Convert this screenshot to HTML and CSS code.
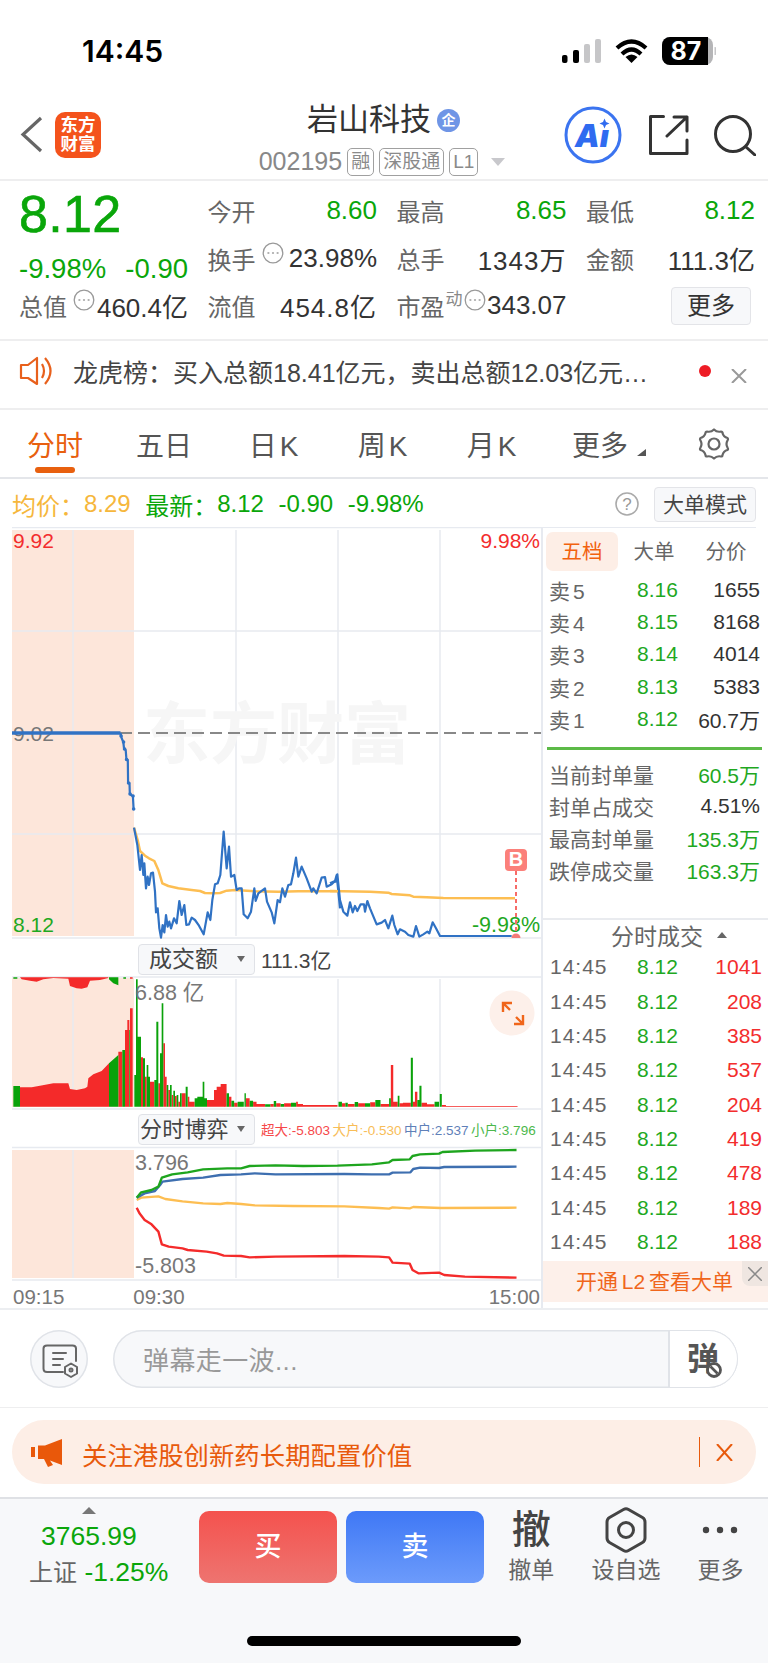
FILE: index.html
```html
<!DOCTYPE html>
<html lang="zh-CN">
<head>
<meta charset="utf-8">
<title>岩山科技</title>
<link rel="stylesheet" href="styles.css">
</head>
<body>
<div class="page">

<div class="status">
  <span class="clock">14:45</span>
  <svg class="status-icons" viewBox="562 31 154 40" width="154" height="40">
    <rect x="562" y="55" width="5.5" height="8" rx="2"/>
    <rect x="573" y="50" width="6" height="13" rx="2"/>
    <rect class="dim" x="584" y="44" width="6" height="19" rx="2"/>
    <rect class="dim" x="595" y="39" width="6" height="24" rx="2"/>
    <path class="wifi" d="M617 48Q631.500 35 646 48"/>
    <path class="wifi" d="M622 54Q631.500 45 641 54"/>
    <path d="M631.500 63L625.500 57Q631.500 52 637.500 57Z"/>
    <rect class="batt-back" x="662" y="37" width="51" height="28" rx="8"/>
    <path d="M670 37H708V65H670A8 8 0 0 1 662 57V45A8 8 0 0 1 670 37Z"/>
    <path class="dim" d="M714.500 47A4 4 0 0 1 714.500 55Z"/>
    <text class="batt-text" x="686" y="60">87</text>
  </svg>
</div>

<header class="top">
  <div class="top-left">
    <svg class="back" viewBox="20 118 23 37" width="23" height="37"><path d="M41 120L23 136.500L41 153"/></svg>
    <div class="logo"><span>东方</span><span>财富</span></div>
  </div>
  <div class="top-mid">
    <div class="name">岩山科技<span class="ent">企</span></div>
    <div class="sub">
      <span class="code">002195</span>
      <span class="tag">融</span>
      <span class="tag">深股通</span>
      <span class="tag">L1</span>
      <i class="tri-down"></i>
    </div>
  </div>
  <div class="top-right">
    <svg class="ic-ai" viewBox="564 106 58 58" width="58" height="58">
      <circle cx="593" cy="135" r="27"/>
      <text x="575" y="147">Aı</text>
      <path d="M604.500 118.500L606 122L609.500 123.500L606 125L604.500 128.500L603 125L599.500 123.500L603 122Z"/>
    </svg>
    <svg class="ic-line" viewBox="647 116 41 40" width="41" height="40"><path d="M662.500 117.500H649.500V154.500H686V141M666 137L686 118M673 118H686V132"/></svg>
    <svg class="ic-line" viewBox="714 114 42 42" width="42" height="42"><circle cx="733" cy="134" r="17.500"/><path d="M746 147L755 155"/></svg>
  </div>
</header>

<section class="quote">
  <div class="big">8.12</div>
  <div class="cell"><span class="lb">今开</span><span class="val green">8.60</span></div>
  <div class="cell"><span class="lb">最高</span><span class="val green">8.65</span></div>
  <div class="cell"><span class="lb">最低</span><span class="val green">8.12</span></div>

  <div class="cell chg"><span class="val green">-9.98%</span><span class="val green">-0.90</span></div>
  <div class="cell"><span class="lb">换手</span><svg class="dots" viewBox="0 0 22 22" width="22" height="22"><circle cx="11" cy="11" r="9.800"/><path d="M6 11h.8M10.600 11h.8M15.200 11h.8"/></svg><span class="val">23.98%</span></div>
  <div class="cell"><span class="lb">总手</span><span class="val wide">1343万</span></div>
  <div class="cell"><span class="lb">金额</span><span class="val">111.3亿</span></div>

  <div class="cell"><span class="lb">总值</span><svg class="dots" viewBox="0 0 22 22" width="22" height="22"><circle cx="11" cy="11" r="9.800"/><path d="M6 11h.8M10.600 11h.8M15.200 11h.8"/></svg><span class="val">460.4亿</span></div>
  <div class="cell"><span class="lb">流值</span><span class="val wide">454.8亿</span></div>
  <div class="cell"><span class="lb">市盈</span><sup class="sup">动</sup><svg class="dots" viewBox="0 0 22 22" width="22" height="22"><circle cx="11" cy="11" r="9.800"/><path d="M6 11h.8M10.600 11h.8M15.200 11h.8"/></svg><span class="val">343.07</span></div>
  <div class="cell cell-end"><span class="more-btn">更多</span></div>
</section>

<section class="notice">
  <svg class="speaker" viewBox="19 353 34 30" width="34" height="30">
    <path d="M21 362H28L37 355V381L28 375H21Z"/><path d="M42 361Q46 368 42 375"/><path d="M45 355Q56 368 45 381"/>
  </svg>
  <span class="notice-text">龙虎榜&#xFF1A;买入总额18.41亿元&#xFF0C;卖出总额12.03亿元…</span>
  <i class="red-dot"></i>
  <svg class="notice-x" viewBox="0 0 16 14" width="16" height="14"><path d="M1 0L15 14M15 0L1 14"/></svg>
</section>

<nav class="tabs">
  <span class="tab on">分时</span>
  <span class="tab">五日</span>
  <span class="tab tab-k">日K</span>
  <span class="tab tab-k">周K</span>
  <span class="tab tab-k">月K</span>
  <span class="tab">更多<svg class="corner" viewBox="0 0 9 7" width="9" height="7"><path d="M0 7L9 0V7Z"/></svg></span>
  <svg class="gear" viewBox="-17 -16 34 32" width="34" height="32">
    <path d="M0 -14.500Q3 -11.500 7 -12.500Q8.500 -12.500 8.500 -11Q9.500 -7 13.500 -6Q14.500 -5 13.500 -3.500Q11.500 0 13.500 3.500Q14.500 5 13.500 6Q9.500 7 8.500 11Q8.500 12.500 7 12.500Q3 11.500 0 14.500Q-3 11.500 -7 12.500Q-8.500 12.500 -8.500 11Q-9.500 7 -13.500 6Q-14.500 5 -13.500 3.500Q-11.500 0 -13.500 -3.500Q-14.500 -5 -13.500 -6Q-9.500 -7 -8.500 -11Q-8.500 -12.500 -7 -12.500Q-3 -11.500 0 -14.500Z"/>
    <circle r="5.500"/>
  </svg>
</nav>

<section class="info">
  <span class="orange">均价&#xFF1A;</span><span class="orange">8.29</span>
  <span class="green ml">最新&#xFF1A;</span><span class="green">8.12</span>
  <span class="green ml">-0.90</span>
  <span class="green ml">-9.98%</span>
  <svg class="help" viewBox="0 0 24 24" width="24" height="24"><circle cx="12" cy="12" r="11"/><text x="12" y="17.500">?</text></svg>
  <span class="mode">大单模式</span>
</section>

<main class="main">
  <div class="charts">
    <svg class="chart" viewBox="0 527 541 413" width="541" height="413">
      <rect class="pink" x="12" y="530" width="122" height="406"/>
      <path class="grid" d="M12 527.500H541M12 631H541M12 834H541M12 938H541M73 530V936M236 530V936M338 530V936M440 530V936"/>
      <text class="wm" x="143" y="758">东方财富</text>
      <path class="dash" d="M120 733H541"/>
      <text class="t20 red" x="13" y="547.500">9.92</text>
      <text class="t20 red end" x="540" y="547.500">9.98%</text>
      <text class="t20 gray" x="13" y="740.500">9.02</text>
      <text class="t20 green-t" x="13" y="931.500">8.12</text>
      <path class="price thick" d="M12 733H120.500"/>
      <path class="price thin" d="M120.500 733L121.600 738 123.300 742 124 748 125.700 750 126.400 759 127.800 760 128.100 783 129.500 783 129.800 793 130.900 795 132.900 796 133.600 809"/>
      <path class="price-dots" d="M121 736h.1M123.500 742h.1M124.500 749h.1M126.500 759.500h.1M128.500 783h.1M130 794h.1M133 796h.1M133.600 809h.1"/>
      <g transform="translate(125 825) scale(.33333)">
        <polyline class="avg" points="27,8 38,45 45,78 60,92 72,100 88,108 100,135 112,175 130,183 160,190 200,195 225,198 240,204 265,205 285,204 305,197 330,195 390,199 460,200 520,199 645,199"/>
        <polyline class="price" points="27,8 37,60 45,135 50,90 55,150 58,115 63,190 68,155 72,180 78,145 84,143 90,200 93,262 98,250 103,310 108,338 113,300 118,322 123,270 128,305 133,290 138,310 147,280 155,295 163,228 170,270 178,240 184,300 192,298 200,278 210,285 222,302 236,328 248,262 256,285 262,225 270,178 278,175 286,150 296,20 305,130 312,65 318,155 328,150 335,195 342,190 350,190 356,268 368,280 378,260 388,190 392,228 400,205 420,190 426,230 440,262 448,295 458,225 465,232 472,190 480,215 490,180 498,178 505,145 513,98 520,155 530,125 545,160 560,200 565,190 575,205 590,158 600,156 605,185 620,178 630,168 635,150 645,250"/>
      </g>
      <g transform="translate(330 825) scale(.33333)">
        <polyline class="avg" points="0,198 120,200 175,203 185,207 240,211 250,215 290,217 340,219 555,220"/>
        <polyline class="price" points="0,175 10,170 18,170 22,148 30,225 40,260 52,272 60,232 68,262 75,243 82,258 92,238 102,238 105,260 112,228 120,250 140,298 155,293 165,285 175,310 187,272 193,300 203,328 210,313 225,320 235,330 250,335 258,303 268,335 280,328 292,320 298,325 308,292 318,310 330,333 545,333"/>
      </g>
      <text class="t21 green-t end" x="540" y="932">-9.98%</text>
      <path class="b-line" d="M516 871V934"/>
      <path class="b-dot" d="M511.500 938A4.500 4.500 0 0 1 520.500 938Z"/>
      <rect class="b-box" x="505" y="849" width="22" height="22" rx="4"/>
      <text class="b-text" x="516" y="866">B</text>
    </svg>

    <div class="bar">
      <span class="sel">成交额<i class="tri-sel"></i></span>
      <span class="amount">111.3亿</span>
    </div>

    <svg class="chart" viewBox="0 976 541 134" width="541" height="134">
      <rect class="pink" x="12" y="978" width="122" height="129"/>
      <path class="grid" d="M12 977H541M12 1109H541M73 979V1107M236 979V1107M338 979V1107M440 979V1107"/>
      <g transform="translate(10 970) scale(.33333)">
        <path class="fill-red" d="M30 22L35 28 60 32 80 35 100 28 130 24 175 26 180 48 200 55 215 56 232 52 240 32 270 30 295 24V22ZM360 22H368V26H360Z"/>
        <path class="fill-green" d="M297 22H325V46L310 40 297 28ZM340 22H348V26H340ZM10 22H22V26H10Z"/>
        <path class="fill-red" d="M30 410V352L65 352 90 347 130 340 175 340 180 357 200 360 225 355 232 350 235 325 250 313 275 303 297 280V410ZM325 410V245H337V410ZM345 410V180H352V410ZM352 410V150H358V410ZM360 410V115H368V410ZM393 410V262H399V410ZM405 410V320H410V410ZM420 410V335H433V410ZM445 410V340H450V410ZM460 410V220H465V410ZM465 410V320H470V410ZM475 410V360H480V410ZM485 410V375H490V410ZM495 410V378H500V410ZM505 410V395H510V410ZM515 410V370H527V410ZM533 410V380H538V410ZM538 410V395H554V410ZM591 410V390H612V410ZM612 410V360H620V410ZM620 410V350H632V410ZM632 410V342H645V410Z"/>
        <path class="fill-green" d="M10 410V348H30V410ZM297 410V280L325 255V410ZM337 410V240H345V410ZM358 410V180H360V410ZM373 410V315H378V410ZM378 410V28H383V410ZM383 410V200H393V410ZM399 410V265H405V410ZM410 410V285H415V410ZM415 410V320H420V410ZM433 410V330H439V410ZM439 410V155H445V410ZM450 410V250H455V410ZM455 410V100H460V410ZM470 410V345H475V410ZM480 410V345H485V410ZM490 410V362H495V410ZM500 410V375H505V410ZM510 410V370H515V410ZM527 410V350H533V410ZM554 410V385H562V410ZM562 410V380H578V410ZM578 410V335H583V410ZM583 410V385H591V410Z"/>
      </g>
      <g transform="translate(0 930) scale(.34435 .33333)">
        <path class="fill-red" d="M652 530V462H658V530ZM665 530V500H672V530ZM680 530V518H690V530ZM714 530V505H725V530ZM735 530V515H745V530ZM745 530V522H770V530ZM785 530V522H795V530ZM802 530V520H815V530ZM825 530V520H845V530ZM860 530V515H865V530ZM865 530V522H880V530ZM880 530V525H980V530ZM993 530V520H1003V530ZM1010 530V522H1030V530ZM1040 530V520H1060V530ZM1075 530V517H1090V530ZM1105 530V522H1130V530ZM1135 530V405H1142V530ZM1142 530V515H1155V530ZM1160 530V520H1170V530ZM1170 530V518H1193V530ZM1199 530V515H1205V530ZM1205 530V485H1212V530ZM1224 530V518H1240V530ZM1240 530V523H1262V530ZM1283 530V525H1295V530ZM1295 530V528H1503V530Z"/>
        <path class="fill-green" d="M658 530V490H665V530ZM672 530V512H680V530ZM690 530V515H708V530ZM710 530V490H714V530ZM725 530V512H735V530ZM770 530V523H785V530ZM795 530V513H802V530ZM815 530V522H825V530ZM845 530V518H860V530ZM983 530V515H993V530ZM1003 530V518H1010V530ZM1030 530V516H1040V530ZM1060 530V520H1075V530ZM1090 530V510H1105V530ZM1130 530V505H1135V530ZM1155 530V497H1160V530ZM1193 530V383H1199V530ZM1212 530V510H1218V530ZM1218 530V467H1224V530ZM1262 530V515H1275V530ZM1277 530V492H1283V530Z"/>
      </g>
      <text class="t21 gray" x="135" y="999.500">6.88 亿</text>
      <circle class="expand-bg" cx="512" cy="1013" r="22.500"/>
      <path class="expand" d="M503 1012V1003H512M503 1003L510 1010M523 1015V1024H514M523 1024L516 1017"/>
    </svg>

    <div class="bar">
      <span class="sel sel-tight">分时博弈<i class="tri-sel"></i></span>
      <span class="legend lg-red">超大:-5.803</span>
      <span class="legend lg-yel">大户:-0.530</span>
      <span class="legend lg-blue">中户:2.537</span>
      <span class="legend lg-green">小户:3.796</span>
    </div>

    <svg class="chart" viewBox="0 1146 541 136" width="541" height="136">
      <rect class="pink" x="12" y="1150" width="122" height="128"/>
      <path class="grid" d="M12 1147.500H541M12 1280H541M73 1150V1278M236 1150V1278M338 1150V1278M440 1150V1278"/>
      <g transform="translate(0 1105) scale(.34435 .33333)">
        <polyline class="ln ln-yel" points="397,285 410,278 460,274 480,282 530,289 590,295 640,297 660,294 700,297 740,301 850,303 1000,304 1100,309 1130,311 1140,307 1190,310 1200,306 1280,309 1500,308"/>
        <polyline class="ln ln-blue" points="397,278 420,265 450,258 465,240 472,230 530,222 590,218 640,210 700,208 740,205 800,208 1000,207 1080,208 1130,208 1140,203 1192,202 1200,192 1220,188 1275,189 1290,186 1500,185"/>
        <polyline class="ln ln-green" points="397,278 410,262 440,255 460,245 470,218 500,208 545,202 590,193 660,190 700,190 725,183 800,181 880,183 980,182 1080,178 1130,172 1140,165 1190,163 1198,153 1220,148 1275,146 1285,141 1380,137 1500,135"/>
        <polyline class="ln ln-red" points="397,308 405,325 420,345 440,358 460,380 470,418 490,425 530,430 545,435 600,440 630,445 650,452 700,453 725,457 800,455 1000,453 1100,455 1130,457 1140,473 1190,476 1198,495 1215,505 1275,503 1290,510 1350,515 1500,518"/>
      </g>
      <text class="t21 gray" x="135" y="1169.500">3.796</text>
      <text class="t21 gray" x="135" y="1272.500">-5.803</text>
    </svg>

    <div class="axis"><span>09:15</span><span>09:30</span><span class="axis-end">15:00</span></div>
  </div>

  <aside class="side">
    <div class="side-tabs"><span class="st on">五档</span><span class="st">大单</span><span class="st">分价</span></div>
    <div class="row"><span class="r-lb sell">卖5</span><span class="green2">8.16</span><span class="r-val">1655</span></div>
    <div class="row"><span class="r-lb sell">卖4</span><span class="green2">8.15</span><span class="r-val">8168</span></div>
    <div class="row"><span class="r-lb sell">卖3</span><span class="green2">8.14</span><span class="r-val">4014</span></div>
    <div class="row"><span class="r-lb sell">卖2</span><span class="green2">8.13</span><span class="r-val">5383</span></div>
    <div class="row"><span class="r-lb sell">卖1</span><span class="green2">8.12</span><span class="r-val">60.7万</span></div>
    <div class="green-rule"></div>
    <div class="row2"><span class="r-lb">当前封单量</span><span class="r-val up">60.5万</span></div>
    <div class="row2"><span class="r-lb">封单占成交</span><span class="r-val">4.51%</span></div>
    <div class="row2"><span class="r-lb">最高封单量</span><span class="r-val up">135.3万</span></div>
    <div class="row2"><span class="r-lb">跌停成交量</span><span class="r-val up">163.3万</span></div>
    <div class="ticks-title"><span>分时成交</span><i class="tri-up"></i></div>
    <div class="tick"><span class="t-time">14:45</span><span class="green2">8.12</span><span class="t-vol">1041</span></div>
    <div class="tick"><span class="t-time">14:45</span><span class="green2">8.12</span><span class="t-vol">208</span></div>
    <div class="tick"><span class="t-time">14:45</span><span class="green2">8.12</span><span class="t-vol">385</span></div>
    <div class="tick"><span class="t-time">14:45</span><span class="green2">8.12</span><span class="t-vol">537</span></div>
    <div class="tick"><span class="t-time">14:45</span><span class="green2">8.12</span><span class="t-vol">204</span></div>
    <div class="tick"><span class="t-time">14:45</span><span class="green2">8.12</span><span class="t-vol">419</span></div>
    <div class="tick"><span class="t-time">14:45</span><span class="green2">8.12</span><span class="t-vol">478</span></div>
    <div class="tick"><span class="t-time">14:45</span><span class="green2">8.12</span><span class="t-vol">189</span></div>
    <div class="tick"><span class="t-time">14:45</span><span class="green2">8.12</span><span class="t-vol">188</span></div>
    <div class="l2">开通 L2 查看大单
      <span class="l2-close"><svg viewBox="0 0 14 14" width="14" height="14"><path d="M0 0L14 14M14 0L0 14"/></svg></span>
    </div>
  </aside>
</main>

<section class="comment">
  <span class="round">
    <svg viewBox="30 1329 58 58" width="58" height="58">
      <path class="doc" d="M63 1371H47Q43.500 1371 43.500 1367.500V1347.500Q43.500 1344.500 47 1344.500H72.500Q76 1344.500 76 1347.500V1360"/>
      <path class="doc" d="M53 1352H66M53 1358H63M53 1364H60"/>
      <path class="doc" d="M71 1362.500L77 1366V1372.500L71 1376L65 1372.500V1366Z"/>
      <circle class="doc" cx="71" cy="1369" r="1.500"/>
    </svg>
  </span>
  <div class="input">
    <span class="ph">弹幕走一波...</span>
    <span class="dm">
      <svg viewBox="668 1329 70 58" width="70" height="58">
        <text class="dm-text" x="687" y="1370">弹</text>
        <circle class="dm-bg" cx="714" cy="1370" r="6.500"/>
        <path class="dm-slash" d="M710.500 1366.500L717.500 1373.500"/>
      </svg>
    </span>
  </div>
</section>

<section class="promo-wrap">
  <div class="promo">
    <svg class="horn" viewBox="30 1438 33 29" width="33" height="29">
      <path d="M31 1447H35V1457H31ZM38 1445.500H45L62 1439V1465L50 1460.500L53 1465L48 1467L44 1459H38Z"/>
    </svg>
    <span class="promo-text">关注港股创新药长期配置价值</span>
    <i class="promo-sep"></i>
    <svg class="promo-x" viewBox="0 0 17 17" width="17" height="17"><path d="M1 0L16 17M16 0L1 17"/></svg>
  </div>
</section>

<footer class="foot">
  <div class="foot-row">
    <div class="index">
      <i class="tri-index"></i>
      <span class="idx-val">3765.99</span>
      <span class="idx-row"><span class="idx-name">上证</span> <span class="green">-1.25%</span></span>
    </div>
    <span class="trade buy">买</span>
    <span class="trade sell-btn">卖</span>
    <div class="act"><span class="act-ic act-glyph">撤</span><span class="act-lb">撤单</span></div>
    <div class="act">
      <svg class="act-ic hex" viewBox="0 0 42 46" width="42" height="46"><path d="M18.500 2.500Q21 1 23.500 2.500L37.500 10.500Q40 12 40 15V31Q40 34 37.500 35.500L23.500 43.500Q21 45 18.500 43.500L4.500 35.500Q2 34 2 31V15Q2 12 4.500 10.500Z"/><circle cx="21" cy="23" r="7.500"/></svg>
      <span class="act-lb">设自选</span>
    </div>
    <div class="act">
      <svg class="act-ic threedots" viewBox="0 0 42 46" width="42" height="46"><circle cx="7" cy="23" r="3.200"/><circle cx="21" cy="23" r="3.200"/><circle cx="35" cy="23" r="3.200"/></svg>
      <span class="act-lb">更多</span>
    </div>
  </div>
  <div class="home"></div>
</footer>

</div>
</body>
</html>
```

FILE: styles.css
```css
* { box-sizing: border-box; }
html, body { margin: 0; padding: 0; }
body {
  width: 768px;
  height: 1663px;
  overflow: hidden;
  background: #fff;
  font-family: "Liberation Sans", "Noto Sans CJK SC", sans-serif;
  color: #333;
}
i { display: block; font-style: normal; }
.page { width: 768px; height: 1663px; display: flex; flex-direction: column; }
.green { color: #0aa60a; }
.orange { color: #f6b73c; }
.green2 { color: #1fa81f; }

/* status bar */
.status { height: 90px; padding: 12px 52px 0 82px; display: flex; align-items: center; justify-content: space-between; flex: none; }
.clock { font: 600 30px/1 Inter, sans-serif; color: #000; }
.status-icons { display: block; fill: #000; }
.status-icons .dim { fill: #c6c6c8; }
.wifi { fill: none; stroke: #000; stroke-width: 4.200; }
.batt-back { fill: #b5b5b7; }
.batt-text { font: 700 25px Inter, sans-serif; fill: #fff; text-anchor: middle; }

/* header */
.top { height: 91px; flex: none; display: grid; grid-template-columns: 1fr auto 1fr; border-bottom: 2px solid #eeeeef; }
.top-left { display: flex; align-items: center; padding-left: 20px; gap: 12px; }
.back { fill: none; stroke: #666; stroke-width: 3.200; }
.logo { width: 46px; height: 46px; border-radius: 10px; background: #f4531c; color: #fff; font-size: 17.500px; line-height: 19px; font-weight: 700; display: flex; flex-direction: column; align-items: center; justify-content: center; }
.logo span { display: block; }
.top-mid { padding: 14px 4px 0 0; display: flex; flex-direction: column; align-items: center; }
.name { font-size: 31px; line-height: 32px; color: #333; display: flex; align-items: center; gap: 6px; padding-left: 3px; }
.ent { width: 23px; height: 23px; border-radius: 50%; background: #6f95e6; color: #fff; font-size: 14px; line-height: 23px; text-align: center; font-weight: 700; }
.sub { margin-top: 11px; display: flex; align-items: center; gap: 5px; color: #888; }
.code { font-size: 25px; }
.tag { height: 28px; border: 1px solid #a0a0a0; border-radius: 5px; font-size: 19px; line-height: 26px; padding: 0 3px; color: #8a8a8a; }
.tri-down { width: 0; height: 0; margin-left: 8px; border-left: 7px solid transparent; border-right: 7px solid transparent; border-top: 8px solid #c8c8cc; }
.top-right { display: flex; align-items: center; justify-content: flex-end; padding-right: 12px; gap: 25.500px; }
.ic-ai circle { fill: none; stroke: #3b74f0; stroke-width: 3; }
.ic-ai text { font: italic 900 31px Inter, sans-serif; fill: #2f6bf0; }
.ic-ai path { fill: #2f6bf0; }
.ic-line { fill: none; stroke: #333; stroke-width: 3; stroke-linecap: round; stroke-linejoin: round; }

/* quote */
.quote { height: 160px; flex: none; padding: 6px 13px 0 19px; display: grid; grid-template-columns: 169px 169.500px 170px 169px; grid-auto-rows: 47.500px; column-gap: 19.500px; border-bottom: 2px solid #eeeeef; }
.big { font-size: 52px; line-height: 52px; font-weight: 400; color: #0aa60a; margin-top: 1px; letter-spacing: .3px; -webkit-text-stroke: .6px #0aa60a; }
.cell { display: flex; align-items: center; }
.cell.chg { justify-content: space-between; margin-top: 14px; height: 40px; }
.cell-end { justify-content: flex-end; padding-right: 4px; }
.lb { font-size: 24px; color: #666; white-space: nowrap; }
.val { font-size: 26px; margin-left: auto; white-space: nowrap; }
.val.wide { letter-spacing: 1px; }
.chg .val { margin-left: 0; font-size: 27.500px; }
.dots { fill: none; stroke: #999; stroke-width: 1.300; margin: 0 0 11px 6px; flex: none; }
.dots path { stroke-width: 1.500; stroke-linecap: round; }
.sup { font-size: 17px; line-height: 17px; color: #888; margin: 0 0 12px 1px; align-self: center; }
.sup + .dots { margin-left: 1px; }
.more-btn { width: 80px; height: 38px; border: 1px solid #e3e4e8; border-radius: 4px; background: #f7f8fa; font-size: 24px; line-height: 36px; text-align: center; }

/* notice */
.notice { height: 69px; flex: none; display: flex; align-items: center; padding: 0 21px 8px 19px; border-bottom: 2px solid #eeeeef; }
.speaker { fill: none; stroke: #e8601c; stroke-width: 2.200; stroke-linejoin: round; }
.notice-text { font-size: 25px; color: #444; margin-left: 20px; white-space: nowrap; }
.red-dot { width: 12px; height: 12px; border-radius: 50%; background: #ee1c25; margin: 0 0 0 auto; }
.notice-x { fill: none; stroke: #999; stroke-width: 2; margin: 10px 0 0 20px; }

/* tabs */
.tabs { height: 69px; flex: none; display: flex; align-items: center; border-bottom: 2px solid #e4e6ea; }
.tab { width: 109px; text-align: center; font-size: 28px; color: #555; position: relative; }
.tab:first-child { margin-left: .5px; }
.tab.on { color: #e8600f; }
.tab.on::after { content: ""; position: absolute; left: 34.500px; top: 43px; width: 40px; height: 6px; border-radius: 3px; background: #e8600f; }
.tab-k { letter-spacing: 3px; padding-left: 4px; }
.corner { position: absolute; left: 91px; top: 25px; fill: #555; }
.gear { margin-left: 42px; fill: none; stroke: #666; stroke-width: 2.200; stroke-linejoin: round; }

/* info line */
.info { height: 48px; flex: none; display: flex; align-items: center; padding: 2px 12px 0; font-size: 24px; }
.ml { margin-left: 14.500px; }
.help { margin-left: auto; fill: none; stroke: #aaa; stroke-width: 1.600; }
.help text { font: 17px "Liberation Sans", sans-serif; fill: #999; stroke: none; text-anchor: middle; }
.mode { margin-left: 15px; width: 102px; height: 35px; border: 1px solid #e3e4e8; border-radius: 4px; background: #f7f8fa; font-size: 21px; line-height: 33px; text-align: center; color: #444; }

/* main */
.main { height: 783px; flex: none; display: flex; border-bottom: 2px solid #eceef1; }
.charts { width: 541px; flex: none; display: flex; flex-direction: column; }
.chart { display: block; flex: none; }
.pink { fill: #fde6da; }
.grid { fill: none; stroke: #e7eaf0; stroke-width: 1.500; }
.wm { font-size: 67px; font-weight: 700; fill: #f6f6f6; }
.dash { fill: none; stroke: #888; stroke-width: 2; stroke-dasharray: 12 6; }
.t20 { font-size: 21px; }
.t21 { font-size: 21.500px; }
.red { fill: #f32d2d; }
.gray { fill: #777; }
.green-t { fill: #1fa81f; }
.end { text-anchor: end; }
.price, .avg, .ln { fill: none; vector-effect: non-scaling-stroke; stroke-linejoin: round; }
.price { stroke: #3072c4; stroke-width: 2.200; }
.price.thick { stroke-width: 3.500; }
.price-dots { fill: none; stroke: #3072c4; stroke-width: 3.500; stroke-linecap: round; }
.avg { stroke: #fdbe52; stroke-width: 2.500; }
.b-line { fill: none; stroke: #f76b68; stroke-width: 2; stroke-dasharray: 4 3; }
.b-dot { fill: #f47a78; }
.b-box { fill: #fb807a; }
.b-text { font-size: 20px; font-weight: 700; fill: #fff; text-anchor: middle; }
.fill-red { fill: #f42a2a; }
.fill-green { fill: #0aa20a; }
.expand-bg { fill: #fdf0ea; }
.expand { fill: none; stroke: #f0661b; stroke-width: 2.400; }
.bar { height: 36px; flex: none; display: flex; align-items: center; padding: 2px 0 0 138px; }
.sel { width: 117px; height: 31px; border: 1px solid #e0e2e7; border-radius: 4px; background: #f7f8fa; font-size: 23px; line-height: 29px; padding-left: 10px; display: flex; align-items: center; color: #444; white-space: nowrap; }
.sel-tight { padding-left: 1px; font-size: 22px; letter-spacing: .2px; }
.tri-sel { width: 0; height: 0; margin-left: auto; margin-right: 9px; border-left: 4.500px solid transparent; border-right: 4.500px solid transparent; border-top: 6px solid #666; }
.amount { font-size: 21px; margin-left: 6px; color: #444; }
.legend { font-size: 13.500px; white-space: nowrap; margin-right: 2.500px; }
.sel + .legend { margin-left: 6px; }
.lg-red { color: #f6484a; }
.lg-yel { color: #f8bd58; }
.lg-blue { color: #5f80b8; }
.lg-green { color: #4cb84c; }
.ln { stroke-width: 2.400; }
.ln-yel { stroke: #fdbe52; }
.ln-blue { stroke: #3e6fb0; }
.ln-green { stroke: #1ea51e; }
.ln-red { stroke: #f42b2b; }
.axis { height: 26px; flex: none; display: flex; align-items: center; font-size: 20.500px; color: #777; padding: 4px 1px 0 13px; }
.axis span:nth-child(2) { margin-left: 69px; }
.axis-end { margin-left: auto; }

/* side */
.side { width: 227px; flex: none; border-left: 2px solid #e7eaf0; position: relative; }
.side-tabs { height: 46.500px; padding: 4px 0 0 3px; border-top: 1.500px solid #e7eaf0; margin-right: 12px; display: grid; grid-template-columns: repeat(3, 72px); }
.st { height: 39px; border-radius: 7px; font-size: 20.500px; line-height: 39px; text-align: center; color: #666; }
.st.on { background: #fdeee6; color: #f2620f; }
.row, .row2, .tick { display: flex; align-items: center; font-size: 21px; white-space: nowrap; }
.row { height: 32.400px; padding: 0 8px 0 6px; }
.r-lb { color: #666; }
.sell { width: 88px; letter-spacing: 3px; }
.r-val { margin-left: auto; color: #333; }
.r-val.up { color: #1fa81f; }
.green-rule { height: 3px; margin: 11.500px 6px 0 4px; background: #5cba47; }
.row2 { height: 32px; padding: 0 8px 0 6px; }
.green-rule + .row2 { margin-top: 8.500px; }
.ticks-title { margin-top: 31.500px; height: 32px; border-top: 2px solid #e9ebef; padding-left: 68px; display: flex; align-items: center; gap: 14px; font-size: 23px; color: #666; }
.tri-up { width: 0; height: 0; border-left: 5px solid transparent; border-right: 5px solid transparent; border-bottom: 6px solid #666; }
.tick { height: 34.400px; padding: 0 6px 0 7px; }
.t-time { width: 87px; letter-spacing: 1px; color: #666; }
.t-vol { margin-left: auto; color: #f32d2d; }
.l2 { margin-top: 2px; height: 41px; background: #fdf0ea; color: #f0661b; font-size: 21px; line-height: 41px; padding-left: 33px; word-spacing: -2px; position: relative; white-space: nowrap; }
.l2-close { position: absolute; right: 0; top: 0; width: 26px; height: 25px; background: #efe6e1; border-bottom-left-radius: 8px; display: flex; align-items: center; justify-content: center; }
.l2-close svg { fill: none; stroke: #8a8a8a; stroke-width: 1.500; }

/* comment */
.comment { height: 98px; flex: none; display: flex; align-items: center; padding: 0 30px; gap: 25px; border-bottom: 1.500px solid #eeeeef; }
.round { width: 58px; height: 58px; border-radius: 50%; background: #f7f8fa; box-shadow: inset 0 0 0 1.500px #e0e3e8; display: block; flex: none; }
.round svg { display: block; }
.doc { fill: none; stroke: #666; stroke-width: 2; stroke-linejoin: round; stroke-linecap: round; }
.input { flex: 1; height: 58px; border-radius: 29px; background: #f7f8fa; box-shadow: inset 0 0 0 1.500px #e0e3e8; display: flex; align-items: center; overflow: hidden; }
.ph { flex: 1; padding-left: 30px; font-size: 26px; letter-spacing: .4px; color: #999; }
.dm { width: 70px; height: 58px; background: #fff; border: 1.500px solid #e0e3e8; border-left-width: 2px; border-radius: 0 29px 29px 0; display: block; }
.dm svg { display: block; margin: -1.500px -2px; }
.dm-text { font-size: 32px; font-weight: 700; fill: #555; }
.dm-bg { fill: #fff; stroke: #555; stroke-width: 2.800; }
.dm-slash { fill: none; stroke: #555; stroke-width: 2.600; }

/* promo */
.promo-wrap { height: 89px; flex: none; padding: 12px 12px 13px; }
.promo { height: 64px; border-radius: 32px; background: #fdeee6; display: flex; align-items: center; padding: 0 23px 0 18px; }
.horn { fill: #e9580a; flex: none; }
.promo-text { margin-left: 19px; font-size: 25.400px; color: #e85a0c; white-space: nowrap; padding-top: 3px; }
.promo-sep { width: 1px; height: 30px; margin-left: auto; background: #e85a0c; }
.promo-x { margin-left: 16px; fill: none; stroke: #e85a0c; stroke-width: 2; }

/* footer */
.foot { flex: 1; background: #f7f8fa; border-top: 2px solid #dfe1e5; display: flex; flex-direction: column; }
.foot-row { display: flex; height: 137px; padding-top: 8px; }
.index { width: 199px; flex: none; padding-left: 29px; display: flex; flex-direction: column; }
.tri-index { width: 0; height: 0; margin-left: 53px; border-left: 7px solid transparent; border-right: 7px solid transparent; border-bottom: 7px solid #777; }
.idx-val { margin: 6px 0 0 12px; font-size: 26.500px; line-height: 32px; color: #0aa60a; }
.idx-row { margin-top: 3px; font-size: 26.500px; line-height: 34px; white-space: nowrap; }
.idx-name { color: #666; font-size: 24px; }
.trade { width: 138px; height: 72px; margin: 4px 9px 0 0; border-radius: 10px; color: #fff; font-size: 27px; font-weight: 500; line-height: 72px; text-align: center; flex: none; }
.buy { background: linear-gradient(#f4524e, #ee7470); }
.sell-btn { background: linear-gradient(#3f78f5, #6c9bfb); margin-right: 0; }
.act { width: 94.600px; flex: none; display: flex; flex-direction: column; align-items: center; }
.act-ic { display: block; height: 46px; flex: none; }
.act-glyph { font-size: 39px; line-height: 45px; font-weight: 500; color: #444; }
.act-lb { margin-top: 2px; font-size: 23px; line-height: 30px; color: #666; white-space: nowrap; }
.hex { fill: none; stroke: #444; stroke-width: 3; }
.threedots { fill: #444; }
.home { width: 274px; height: 10px; border-radius: 5px; background: #000; margin-left: 247px; }
```
